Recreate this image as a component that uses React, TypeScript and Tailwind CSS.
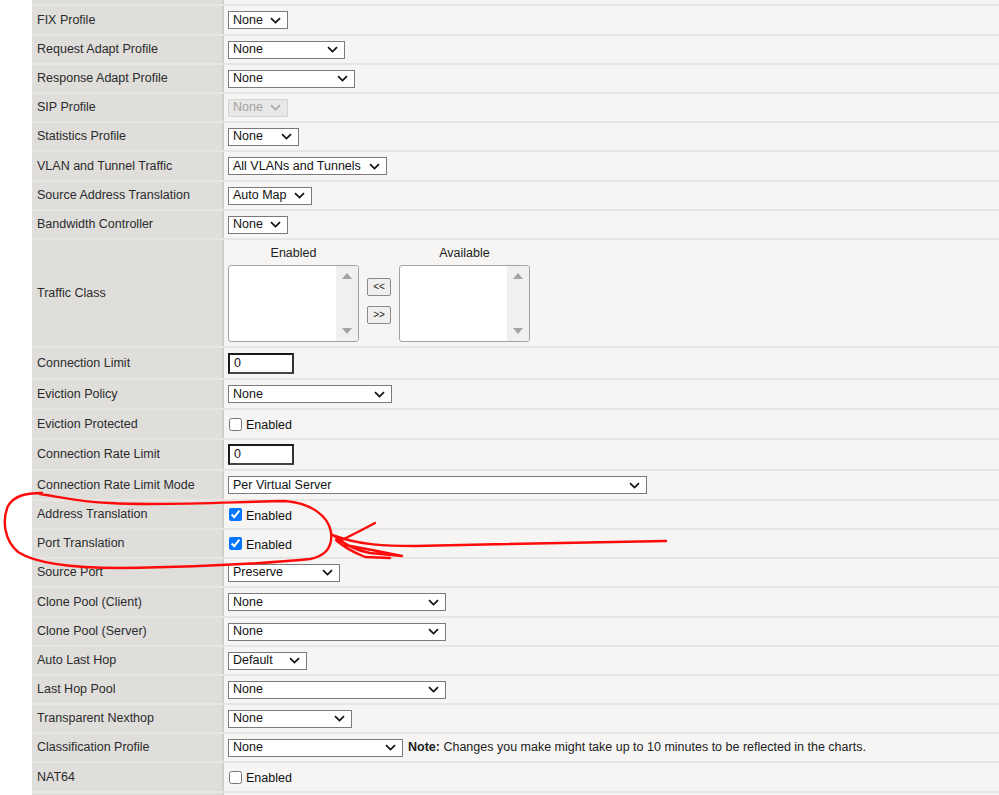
import React from "react";

type RowProps = { label?: string; h: number; children?: React.ReactNode };

function Row({ label, h, children }: RowProps) {
  return (
    <div className="flex border-t-2 border-[#e6e5e3]" style={{ height: h }}>
      <div className="w-[192px] shrink-0 bg-[#dfdedb] border-r-2 border-[#cfcecb] flex items-center pl-[5px] text-[12.5px] text-[#2b2b2b]">
        {label}
      </div>
      <div className="flex-1 bg-[#f6f5f3] flex items-center pl-[4px] text-[12.5px] text-[#222]">
        {children}
      </div>
    </div>
  );
}

function Chevron({ gray }: { gray?: boolean }) {
  return (
    <svg width="11" height="7" viewBox="0 0 11 7" className="shrink-0">
      <path d="M1 1.2 L5.5 5.5 L10 1.2" fill="none" stroke={gray ? "#a8a8a8" : "#111"} strokeWidth="1.7" />
    </svg>
  );
}

function Select({ w, value = "None", disabled }: { w: number; value?: string; disabled?: boolean }) {
  return (
    <div
      className={`h-[18px] flex items-center justify-between pl-[4px] pr-[6px] border text-[12.5px] leading-none ${
        disabled ? "bg-[#e9e8e6] border-[#d3d3d3] text-[#a3a3a3]" : "bg-white border-[#7a7a7a] text-[#111]"
      }`}
      style={{ width: w }}
    >
      <span>{value}</span>
      <Chevron gray={disabled} />
    </div>
  );
}

function Check({ checked }: { checked?: boolean }) {
  return (
    <label className="flex items-center">
      <input type="checkbox" readOnly checked={!!checked} className="m-0 ml-[1px] w-[13px] h-[13px]" />
      <span className="ml-[4px] pt-[3px] text-[12.5px] text-[#111]">Enabled</span>
    </label>
  );
}

function NumInput() {
  return (
    <div className="w-[66px] h-[21px] bg-white border-2 border-t-[#1a1a1a] border-l-[#1a1a1a] border-r-[#333] border-b-[#444] flex items-center pl-[4px] text-[12.5px] text-[#111]">
      0
    </div>
  );
}

function ListBox() {
  return (
    <div className="w-[131px] h-[77px] bg-white border border-[#a2a2a2] rounded-[3px] flex justify-end overflow-hidden">
      <div className="w-[22px] h-full bg-[#f0f0f0] flex flex-col items-center justify-between py-[7px]">
        <svg width="10" height="6" viewBox="0 0 10 6">
          <path d="M0 6 L5 0 L10 6 Z" fill="#a3a3a3" />
        </svg>
        <svg width="10" height="6" viewBox="0 0 10 6">
          <path d="M0 0 L5 6 L10 0 Z" fill="#a3a3a3" />
        </svg>
      </div>
    </div>
  );
}

function SmallBtn({ text }: { text: string }) {
  return (
    <div className="w-[24px] h-[18px] bg-[#efefef] border border-[#8a8a8a] rounded-[2px] flex items-center justify-center text-[10px] text-[#222] leading-none">
      {text}
    </div>
  );
}

export default function App() {
  return (
    <div
      className="relative w-[999px] h-[795px] overflow-hidden bg-white"
      style={{ fontFamily: '"Liberation Sans", Arial, sans-serif' }}
    >
      <div className="ml-[32px]">
        <div className="flex h-[4px]">
          <div className="w-[192px] bg-[#dfdedb] border-r-2 border-[#cfcecb]" />
          <div className="flex-1 bg-[#f6f5f3]" />
        </div>
        <Row label="FIX Profile" h={30}><Select w={60} /></Row>
        <Row label="Request Adapt Profile" h={29}><Select w={117} /></Row>
        <Row label="Response Adapt Profile" h={29}><Select w={127} /></Row>
        <Row label="SIP Profile" h={29}><Select w={60} disabled /></Row>
        <Row label="Statistics Profile" h={29}><Select w={71} /></Row>
        <Row label="VLAN and Tunnel Traffic" h={30}><Select w={159} value="All VLANs and Tunnels" /></Row>
        <Row label="Source Address Translation" h={29}><Select w={84} value="Auto Map" /></Row>
        <Row label="Bandwidth Controller" h={29}><Select w={60} /></Row>
        <Row label="Traffic Class" h={108}>
          <div className="flex items-start">
            <div className="flex flex-col items-center">
              <span className="text-[12.5px] text-[#222] mb-[2px]">Enabled</span>
              <ListBox />
            </div>
            <div className="flex flex-col gap-[10px] mx-[8px] mt-[34px]">
              <SmallBtn text="<<" />
              <SmallBtn text=">>" />
            </div>
            <div className="flex flex-col items-center">
              <span className="text-[12.5px] text-[#222] mb-[2px]">Available</span>
              <ListBox />
            </div>
          </div>
        </Row>
        <Row label="Connection Limit" h={32}><NumInput /></Row>
        <Row label="Eviction Policy" h={30}><Select w={164} /></Row>
        <Row label="Eviction Protected" h={30}><Check /></Row>
        <Row label="Connection Rate Limit" h={31}><NumInput /></Row>
        <Row label="Connection Rate Limit Mode" h={30}><Select w={419} value="Per Virtual Server" /></Row>
        <Row label="Address Translation" h={29}><Check checked /></Row>
        <Row label="Port Translation" h={29}><Check checked /></Row>
        <Row label="Source Port" h={29}><Select w={112} value="Preserve" /></Row>
        <Row label="Clone Pool (Client)" h={30}><Select w={218} /></Row>
        <Row label="Clone Pool (Server)" h={29}><Select w={218} /></Row>
        <Row label="Auto Last Hop" h={29}><Select w={79} value="Default" /></Row>
        <Row label="Last Hop Pool" h={29}><Select w={218} /></Row>
        <Row label="Transparent Nexthop" h={29}><Select w={124} /></Row>
        <Row label="Classification Profile" h={29}>
          <Select w={175} />
          <span className="ml-[5px] text-[12.5px] text-[#222]">
            <b>Note:</b> Changes you make might take up to 10 minutes to be reflected in the charts.
          </span>
        </Row>
        <Row label="NAT64" h={30}><Check /></Row>
        <Row h={30} />
      </div>

      {/* red hand-drawn annotation */}
      <svg className="absolute inset-0 pointer-events-none" width="999" height="795">
        <g fill="none" stroke="#ff0a0a" strokeWidth="2.4" strokeLinecap="round" strokeLinejoin="round">
          <path d="M 40 494 C 60 497, 80 502, 110 503 C 160 506, 230 502, 285 501 C 310 503, 328 515, 331 532 C 333 548, 325 556, 310 559 C 260 564, 180 567, 120 568 C 70 568, 35 563, 18 552 C 4 540, 2 520, 8 506 C 14 496, 25 493, 42 493" />
          <path d="M 666 541 C 600 542, 500 544, 415 546 C 385 546, 360 545, 335 536" />
          <path d="M 375 523 C 362 530, 350 536, 338 542" />
          <path d="M 333 535 C 345 545, 358 551, 370 553 L 402 556 L 372 550 L 345 545" />
          <path d="M 336 540 C 345 548, 355 553, 365 557 L 390 558" />
        </g>
      </svg>
    </div>
  );
}
